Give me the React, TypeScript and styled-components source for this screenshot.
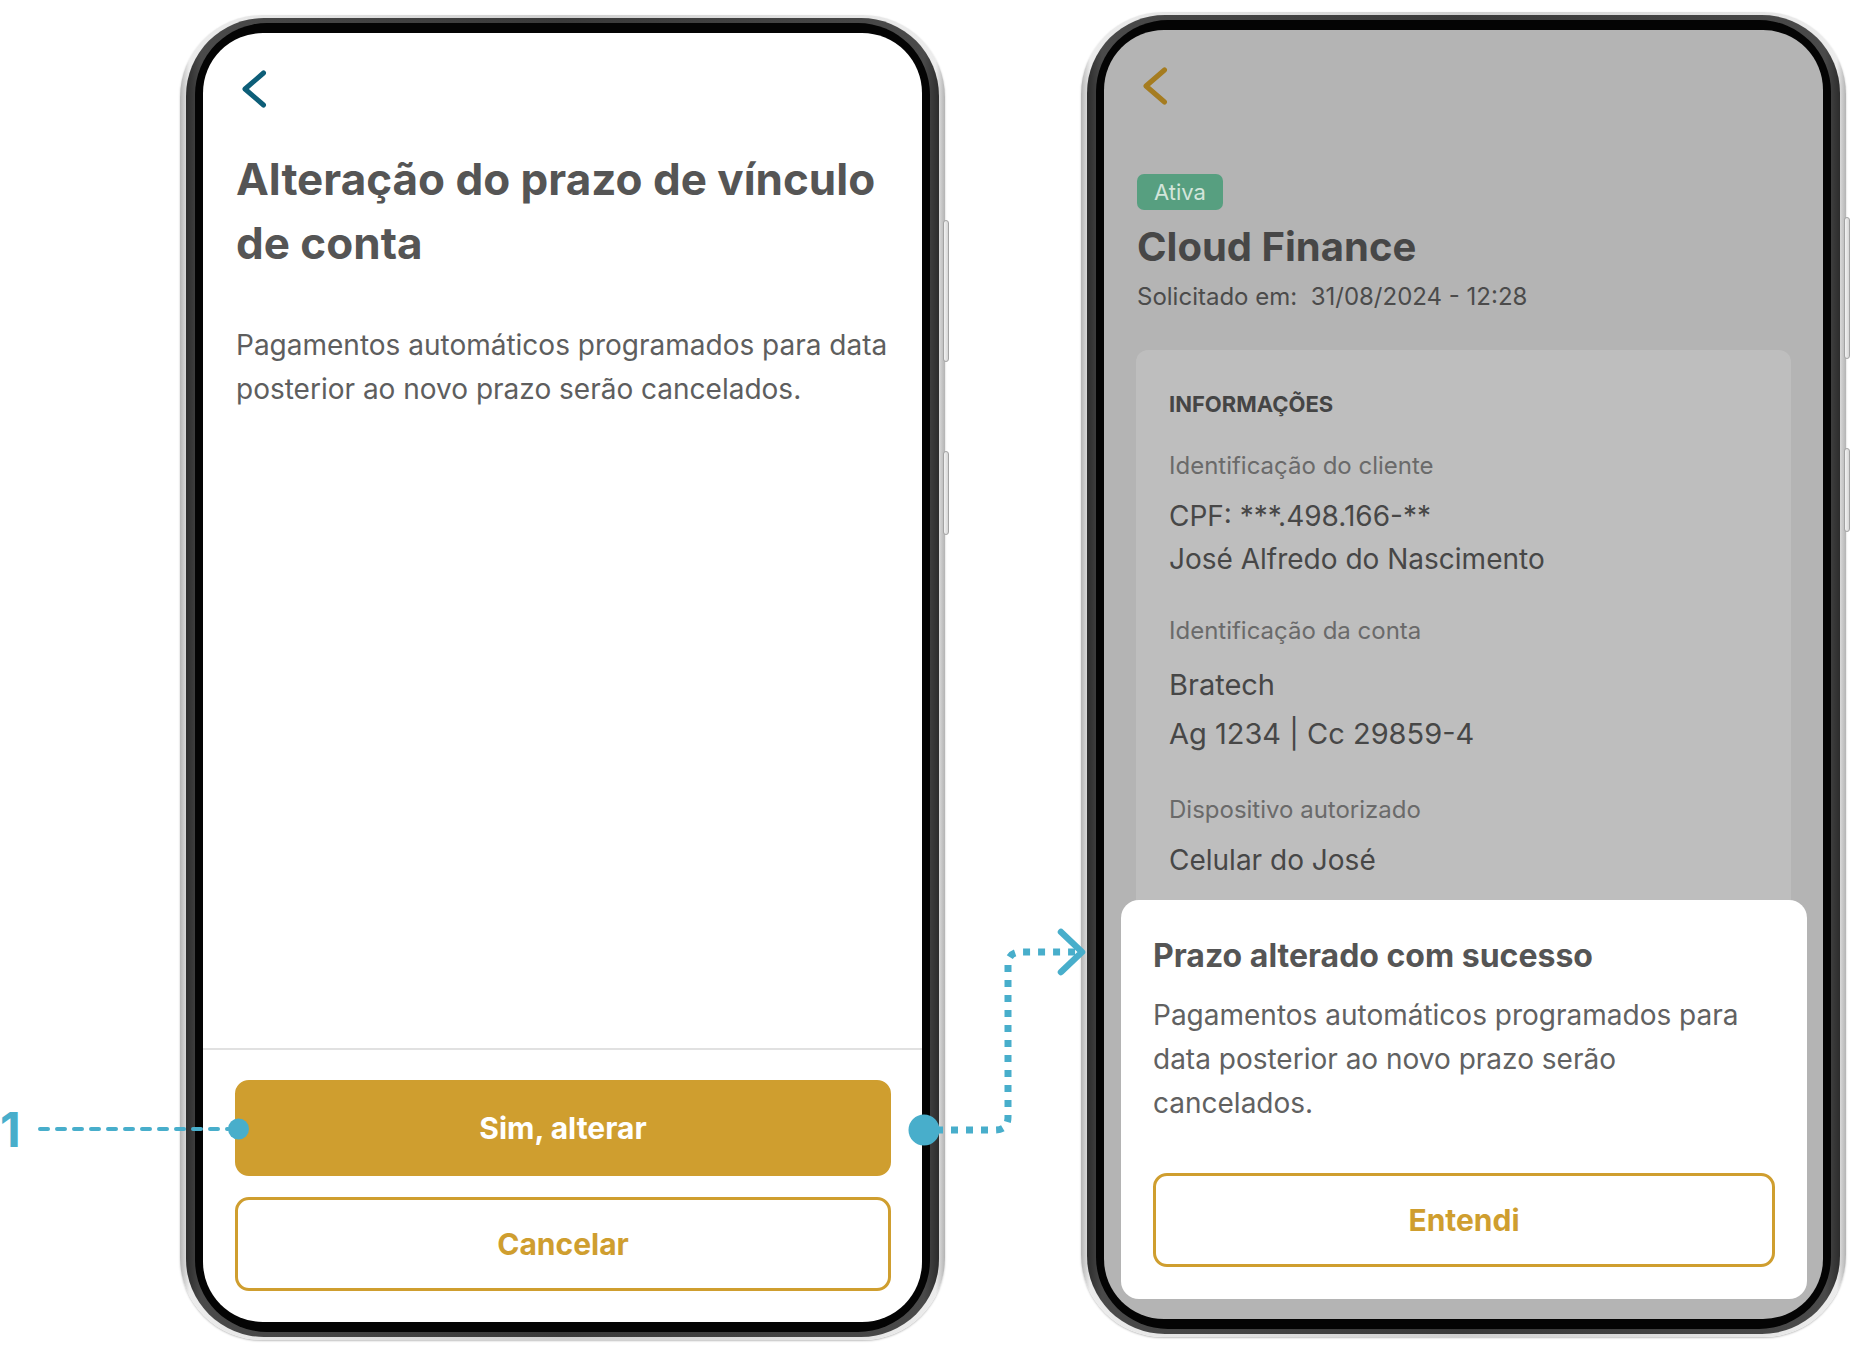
import React from "react";
import styled, { createGlobalStyle } from "styled-components";

const GlobalStyle = createGlobalStyle`
  html, body {
    margin: 0;
    padding: 0;
    background: #ffffff;
  }
  body {
    font-family: "Inter", "Noto Sans", sans-serif;
  }
`;

const GOLD = "#CF9E2F";
const ACCENT = "#48AECB";

const Stage = styled.div`
  position: relative;
  width: 1856px;
  height: 1356px;
  display: flex;
  align-items: flex-start;
  gap: 136px;
  padding-left: 180px;
  box-sizing: border-box;
  overflow: hidden;
`;

const PhoneShell = styled.div<{ $top: number }>`
  position: relative;
  margin-top: ${(p) => p.$top}px;
  width: 765px;
  height: 1325px;
  flex-shrink: 0;
  box-sizing: border-box;
  padding: 3px 6px;
  border-radius: 82px;
  background: linear-gradient(
    90deg,
    #b4b4b4 0%,
    #ececec 1.2%,
    #cfcfcf 50%,
    #ececec 98.8%,
    #b4b4b4 100%
  );
  box-shadow: 0 1px 2px rgba(0, 0, 0, 0.25);
`;

const Frame = styled.div`
  height: 100%;
  box-sizing: border-box;
  padding: 5px 9px;
  border-radius: 78px;
  background: linear-gradient(90deg, #2c2c2c, #4a4a4a 2%, #3a3a3a 50%, #4a4a4a 98%, #2c2c2c);
`;

const Bezel = styled.div`
  height: 100%;
  box-sizing: border-box;
  padding: 10px 8px;
  border-radius: 72px;
  background: #040404;
`;

const Screen = styled.div<{ $bg: string }>`
  position: relative;
  height: 100%;
  border-radius: 60px;
  overflow: hidden;
  background: ${(p) => p.$bg};
  display: flex;
  flex-direction: column;
`;

const SideKey = styled.div<{ $top: number; $height: number }>`
  position: absolute;
  right: -4px;
  top: ${(p) => p.$top}px;
  width: 6px;
  height: ${(p) => p.$height}px;
  box-sizing: border-box;
  border-radius: 3px;
  border: 1px solid #a3a3a3;
  background: linear-gradient(90deg, #f3f3f3, #d6d6d6);
`;

/* ---------- shared screen parts ---------- */

const Content = styled.div`
  display: flex;
  flex-direction: column;
  align-items: flex-start;
  padding: 37px 20px 0 33px;
`;

const BackIcon = styled.svg`
  display: block;
  margin-left: 5px;
`;

const PageTitle = styled.h1`
  margin: 39px 0 0;
  font-family: "Inter", sans-serif;
  font-weight: 700;
  font-size: 44px;
  line-height: 64px;
  color: #555555;
`;

const Lead = styled.p`
  margin: 48px 0 0;
  font-family: "Inter", sans-serif;
  font-size: 28px;
  line-height: 44px;
  color: #5e5e5e;
`;

const Footer = styled.div`
  margin-top: auto;
  border-top: 2px solid #e1e1e1;
  padding: 30px 31px 31px 32px;
  display: flex;
  flex-direction: column;
  gap: 21px;
`;

const ActionButton = styled.button<{ $variant: "solid" | "outline"; $height: number }>`
  display: flex;
  align-items: center;
  justify-content: center;
  width: 100%;
  height: ${(p) => p.$height}px;
  box-sizing: border-box;
  border-radius: 14px;
  border: 3px solid ${GOLD};
  background: ${(p) => (p.$variant === "solid" ? GOLD : "#ffffff")};
  color: ${(p) => (p.$variant === "solid" ? "#ffffff" : GOLD)};
  font-family: "Inter", sans-serif;
  font-weight: 700;
  font-size: 30px;
  cursor: pointer;
`;

/* ---------- detail screen ---------- */

const DetailContent = styled.div`
  display: flex;
  flex-direction: column;
  align-items: stretch;
  padding: 37px 32px 0 33px;
`;

const Badge = styled.span`
  align-self: flex-start;
  margin-top: 69px;
  height: 36px;
  padding: 0 17px;
  border-radius: 7px;
  background: #579f80;
  color: #d3e5db;
  font-size: 22px;
  line-height: 36px;
`;

const DetailTitle = styled.h2`
  margin: 13px 0 0;
  font-weight: 700;
  font-size: 40px;
  line-height: 48px;
  color: #474747;
`;

const Requested = styled.div`
  margin-top: 10px;
  font-size: 24px;
  line-height: 32px;
  color: #4b4b4b;
`;

const InfoCard = styled.section`
  margin: 37px 0 0 -1px;
  height: 806px;
  box-sizing: border-box;
  padding: 40px 33px 0;
  border-radius: 12px;
  background: #bebebe;
`;

const CardHeading = styled.div`
  font-weight: 700;
  font-size: 22px;
  line-height: 28px;
  color: #454545;
`;

const Groups = styled.div`
  margin-top: 32px;
  display: flex;
  flex-direction: column;
  gap: 34px;
`;

const FieldGroup = styled.div<{ $shift: number }>`
  margin-top: ${(p) => p.$shift}px;
`;

const FieldLabel = styled.div`
  font-size: 24px;
  line-height: 32px;
  color: #6a6a6a;
`;

const FieldValues = styled.div`
  margin-top: 13px;
`;

const FieldValue = styled.div<{ $big?: boolean }>`
  font-size: ${(p) => (p.$big ? 29 : 28)}px;
  line-height: ${(p) => (p.$big ? 49 : 43)}px;
  color: #474747;
`;

const Sheet = styled.div`
  position: absolute;
  left: 17px;
  right: 16px;
  bottom: 20px;
  padding: 36px 32px 32px;
  border-radius: 18px;
  background: #ffffff;
`;

const SheetTitle = styled.h3`
  margin: 0;
  font-weight: 700;
  font-size: 32px;
  line-height: 40px;
  color: #555555;
`;

const SheetText = styled.p`
  margin: 17px 0 48px;
  max-width: 600px;
  font-size: 28px;
  line-height: 44px;
  color: #616161;
`;

/* ---------- annotations ---------- */

const Overlay = styled.svg`
  position: absolute;
  left: 0;
  top: 0;
  z-index: 5;
  pointer-events: none;
`;

const StepLabel = styled.span`
  position: absolute;
  left: 0;
  top: 1106px;
  z-index: 5;
  font-family: "Inter", sans-serif;
  font-weight: 700;
  font-size: 48px;
  line-height: 48px;
  color: ${ACCENT};
`;

function Chevron({ color }: { color: string }) {
  return (
    <BackIcon width="26" height="38" viewBox="0 0 26 38">
      <polyline
        points="22.5,3 4,19 22.5,35"
        fill="none"
        stroke={color}
        strokeWidth="5"
        strokeLinecap="round"
        strokeLinejoin="round"
      />
    </BackIcon>
  );
}

function Phone({ top, bg, children }: { top: number; bg: string; children: React.ReactNode }) {
  return (
    <PhoneShell $top={top}>
      <Frame>
        <Bezel>
          <Screen $bg={bg}>{children}</Screen>
        </Bezel>
      </Frame>
      <SideKey $top={205} $height={142} />
      <SideKey $top={436} $height={84} />
    </PhoneShell>
  );
}

const fields = [
  { label: "Identificação do cliente", values: ["CPF: ***.498.166-**", "José Alfredo do Nascimento"], big: false, shift: 0 },
  { label: "Identificação da conta", values: ["Bratech", "Ag 1234 | Cc 29859-4"], big: true, shift: 0 },
  { label: "Dispositivo autorizado", values: ["Celular do José"], big: false, shift: 2 },
];

export default function App() {
  return (
    <>
      <GlobalStyle />
      <Stage>
        <Phone top={15} bg="#ffffff">
          <Content>
            <Chevron color="#0d5e78" />
            <PageTitle>Alteração do prazo de vínculo de conta</PageTitle>
            <Lead>Pagamentos automáticos programados para data posterior ao novo prazo serão cancelados.</Lead>
          </Content>
          <Footer>
            <ActionButton $variant="solid" $height={96}>
              Sim, alterar
            </ActionButton>
            <ActionButton $variant="outline" $height={94}>
              Cancelar
            </ActionButton>
          </Footer>
        </Phone>

        <Phone top={12} bg="#b4b4b4">
          <DetailContent>
            <Chevron color="#a57c20" />
            <Badge>Ativa</Badge>
            <DetailTitle>Cloud Finance</DetailTitle>
            <Requested>Solicitado em:&nbsp; 31/08/2024 - 12:28</Requested>
            <InfoCard>
              <CardHeading>INFORMAÇÕES</CardHeading>
              <Groups>
                {fields.map((f) => (
                  <FieldGroup key={f.label} $shift={f.shift}>
                    <FieldLabel>{f.label}</FieldLabel>
                    <FieldValues>
                      {f.values.map((v) => (
                        <FieldValue key={v} $big={f.big}>
                          {v}
                        </FieldValue>
                      ))}
                    </FieldValues>
                  </FieldGroup>
                ))}
              </Groups>
            </InfoCard>
          </DetailContent>
          <Sheet>
            <SheetTitle>Prazo alterado com sucesso</SheetTitle>
            <SheetText>Pagamentos automáticos programados para data posterior ao novo prazo serão cancelados.</SheetText>
            <ActionButton $variant="outline" $height={94}>
              Entendi
            </ActionButton>
          </Sheet>
        </Phone>

        <StepLabel>1</StepLabel>
        <Overlay width="1856" height="1356" viewBox="0 0 1856 1356">
          <line
            x1="40"
            y1="1129"
            x2="228"
            y2="1129"
            stroke={ACCENT}
            strokeWidth="4"
            strokeDasharray="8 9"
            strokeLinecap="round"
          />
          <circle cx="238.5" cy="1129" r="10.5" fill={ACCENT} />
          <circle cx="924" cy="1130" r="15.5" fill={ACCENT} />
          <path
            d="M 936 1130 H 995 Q 1008 1130 1008 1117 V 965 Q 1008 952 1021 952 H 1076"
            fill="none"
            stroke={ACCENT}
            strokeWidth="7"
            strokeDasharray="7 8"
          />
          <polyline
            points="1061,932 1082,952 1061,972"
            fill="none"
            stroke={ACCENT}
            strokeWidth="6.5"
            strokeLinecap="round"
            strokeLinejoin="round"
          />
        </Overlay>
      </Stage>
    </>
  );
}
